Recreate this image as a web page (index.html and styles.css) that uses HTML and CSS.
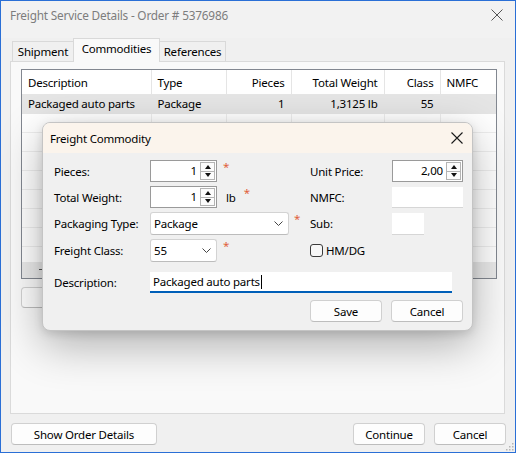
FILE: index.html
```html
<!DOCTYPE html>
<html>
<head>
<meta charset="utf-8">
<title>Freight Service Details</title>
<link rel="stylesheet" href="styles.css">
</head>
<body>
<div class="window">
  <div class="titlebar">
    <span class="title">Freight Service Details - Order # 5376986</span>
    <svg class="win-close" width="12" height="12" viewBox="0 0 12 12"><path d="M0.5 0.5 L11.5 11.5 M11.5 0.5 L0.5 11.5" stroke="#555" stroke-width="1" fill="none"/></svg>
  </div>
  <div class="tabs">
    <div class="tab t-ship">Shipment</div>
    <div class="tab t-comm active">Commodities</div>
    <div class="tab t-ref">References</div>
  </div>
  <div class="panel">
    <div class="list">
      <div class="list-body">
        <table class="grid">
          <colgroup>
            <col class="c1"><col class="c2"><col class="c3"><col class="c4"><col class="c5"><col class="c6">
          </colgroup>
          <thead>
            <tr><th>Description</th><th>Type</th><th class="r">Pieces</th><th class="r">Total Weight</th><th class="r">Class</th><th>NMFC</th></tr>
          </thead>
          <tbody>
            <tr class="sel"><td>Packaged auto parts</td><td>Package</td><td class="r">1</td><td class="r">1,3125 lb</td><td class="r">55</td><td></td></tr>
            <tr><td></td><td></td><td></td><td></td><td></td><td></td></tr>
            <tr><td></td><td></td><td></td><td></td><td></td><td></td></tr>
            <tr><td></td><td></td><td></td><td></td><td></td><td></td></tr>
            <tr><td></td><td></td><td></td><td></td><td></td><td></td></tr>
            <tr><td></td><td></td><td></td><td></td><td></td><td></td></tr>
            <tr><td></td><td></td><td></td><td></td><td></td><td></td></tr>
            <tr><td></td><td></td><td></td><td></td><td></td><td></td></tr>
            <tr><td></td><td></td><td></td><td></td><td></td><td></td></tr>
          </tbody>
        </table>
      </div>
      <div class="hscroll"><span class="dash"></span></div>
    </div>
    <div class="list-actions"><button class="btn add">Add</button></div>
  </div>
  <div class="footer">
    <button class="btn show">Show Order Details</button>
    <span class="spacer"></span>
    <button class="btn std">Continue</button>
    <button class="btn std">Cancel</button>
  </div>

  <div class="dialog">
    <div class="dlg-title">
      <span>Freight Commodity</span>
      <svg class="dlg-close" width="12" height="12" viewBox="0 0 12 12"><path d="M0.5 0.5 L11.5 11.5 M11.5 0.5 L0.5 11.5" stroke="#1a1a1a" stroke-width="1.1" fill="none"/></svg>
    </div>
    <div class="dlg-body">
      <div class="form">
        <label>Pieces:</label>
        <div class="cell">
          <div class="spin w67"><span class="val">1</span><span class="spinbtns"><span class="sb up"></span><span class="sb down"></span></span></div>
          <span class="req">*</span>
        </div>
        <label>Unit Price:</label>
        <div class="cell">
          <div class="spin w71"><span class="val">2,00</span><span class="spinbtns"><span class="sb up"></span><span class="sb down"></span></span></div>
        </div>

        <label>Total Weight:</label>
        <div class="cell">
          <div class="spin w67"><span class="val">1</span><span class="spinbtns"><span class="sb up"></span><span class="sb down"></span></span></div>
          <span class="unit">lb</span>
          <span class="req">*</span>
        </div>
        <label>NMFC:</label>
        <div class="cell"><div class="text-in w71"></div></div>

        <label>Packaging Type:</label>
        <div class="cell">
          <div class="combo w139"><span>Package</span><svg width="9" height="5" viewBox="0 0 9 5"><path d="M0.5 0.5 L4.5 4.5 L8.5 0.5" stroke="#444" stroke-width="1" fill="none"/></svg></div>
          <span class="req r6">*</span>
        </div>
        <label>Sub:</label>
        <div class="cell"><div class="text-in w32 h22"></div></div>

        <label>Freight Class:</label>
        <div class="cell">
          <div class="combo w67"><span>55</span><svg width="9" height="5" viewBox="0 0 9 5"><path d="M0.5 0.5 L4.5 4.5 L8.5 0.5" stroke="#444" stroke-width="1" fill="none"/></svg></div>
          <span class="req">*</span>
        </div>
        <div class="check-cell"><span class="checkbox"></span><span>HM/DG</span></div>
      </div>
      <div class="desc-row">
        <label>Description:</label>
        <div class="desc-in"><span>Packaged auto parts</span><span class="caret"></span></div>
      </div>
      <div class="dlg-buttons">
        <button class="btn std">Save</button>
        <button class="btn std">Cancel</button>
      </div>
    </div>
  </div>

  <svg class="grip" width="8" height="8" viewBox="0 0 8 8">
    <rect x="6" y="0" width="1.5" height="1.5" fill="#b5b5b5"/>
    <rect x="3" y="3" width="1.5" height="1.5" fill="#b5b5b5"/>
    <rect x="6" y="3" width="1.5" height="1.5" fill="#b5b5b5"/>
    <rect x="0" y="6" width="1.5" height="1.5" fill="#b5b5b5"/>
    <rect x="3" y="6" width="1.5" height="1.5" fill="#b5b5b5"/>
    <rect x="6" y="6" width="1.5" height="1.5" fill="#b5b5b5"/>
  </svg>
</div>
</body>
</html>
```
FILE: styles.css
```css
* { box-sizing: border-box; }
html, body { margin: 0; padding: 0; }
body {
  width: 516px;
  height: 453px;
  overflow: hidden;
  font-family: "Noto Sans", "Liberation Sans", sans-serif;
  font-size: 11.5px;
  letter-spacing: -0.2px;
  color: #000;
  background: #f0f0f0;
}
.window {
  position: relative;
  width: 516px;
  height: 453px;
  border: 1px solid #2a6fd6;
  background: #f0f0f0;
  display: flex;
  flex-direction: column;
}
.titlebar {
  height: 37px;
  display: flex;
  justify-content: space-between;
  align-items: flex-start;
  padding: 6px 12px 0 9px;
  background: #f2f2f2;
}
.title { color: #7d7d7d; font-size: 11.8px; line-height: 16px; }
.win-close { margin-top: 2px; }

.tabs {
  height: 23px;
  display: flex;
  align-items: flex-end;
  padding-left: 11px;
  position: relative;
  z-index: 1;
}
.tab {
  height: 20px;
  border: 1px solid #d9d9d9;
  border-bottom: none;
  background: #f0f0f0;
  text-align: center;
  line-height: 19px;
}
.t-ship { width: 62px; }
.t-comm { width: 87px; margin-left: -1px; }
.t-ref { width: 67px; margin-left: -1px; }
.tab.active {
  height: 24px;
  margin-bottom: -1px;
  background: #f9f9f9;
  line-height: 20px;
}

.panel {
  margin: 0 10px 0 9px;
  height: 353px;
  border: 1px solid #dadada;
  background: #f9f9f9;
  padding: 7px 7px 0 10px;
}
.list {
  height: 210px;
  border: 1px solid #828790;
  background: #fff;
  display: flex;
  flex-direction: column;
}
.list-body { height: 192px; overflow: hidden; }
.grid {
  border-collapse: collapse;
  table-layout: fixed;
  width: 474px;
}
.c1 { width: 129px; }
.c2 { width: 75px; }
.c3 { width: 65px; }
.c4 { width: 93px; }
.c5 { width: 56px; }
.c6 { width: 56px; }
.grid th {
  height: 24px;
  font-weight: normal;
  text-align: left;
  padding: 0 6px;
  border-right: 1px solid #e5e5e5;
  white-space: nowrap;
}
.grid th:last-child { border-right: none; }
.grid td {
  height: 19px;
  padding: 0 6px;
  border: 1px solid #eeeeee;
  border-top: none;
  white-space: nowrap;
  overflow: hidden;
}
.grid td:first-child { border-left: none; }
.grid td:last-child { border-right: none; }
.grid .r { text-align: right; }
.grid tr.sel td { background: #e5e5e5; border-color: #e5e5e5; }
.hscroll {
  height: 16px;
  background: #eaeaea;
  position: relative;
}
.dash {
  position: absolute;
  left: 17px;
  top: 7px;
  width: 3px;
  height: 1px;
  background: #555;
}
.list-actions { margin-top: 8px; }
.btn {
  font-family: inherit;
  font-size: 11.5px;
  letter-spacing: -0.2px;
  color: #000;
  background: #fdfdfd;
  border: 1px solid #d0d0d0;
  border-bottom-color: #bdbdbd;
  border-radius: 4px;
  padding: 0;
  height: 22px;
  line-height: 19px;
  text-align: center;
}
.btn.add { width: 80px; height: 21px; }
.footer {
  display: flex;
  margin-top: 9px;
  padding: 0 9px 0 10px;
  gap: 9px;
}
.btn.show { width: 146px; }
.btn.std { width: 72px; }
.spacer { flex: 1; }

.dialog {
  position: absolute;
  left: 41px;
  top: 121px;
  width: 431px;
  height: 209px;
  border: 1px solid #c4c4c4;
  border-radius: 8px;
  background: #f0f0f0;
  box-shadow: 0 14px 44px rgba(0, 0, 0, 0.30), 0 3px 10px rgba(0, 0, 0, 0.12);
  overflow: hidden;
  z-index: 5;
}
.dlg-title {
  height: 30px;
  background: #fbf4ec;
  display: flex;
  align-items: center;
  justify-content: space-between;
  padding: 0 9px 0 7px;
}
.dlg-body { padding: 7px 9px 0 11px; }
.form {
  display: grid;
  grid-template-columns: 96px 160px 82px 71px;
  grid-template-rows: 22px 22px 23px 23px;
  row-gap: 4px;
  align-items: center;
}
.cell { display: flex; align-items: center; height: 100%; }
.spin {
  height: 22px;
  background: #fff;
  border: 1px solid #9a9a9a;
  display: flex;
}
.w67 { width: 67px; }
.w71 { width: 71px; }
.w139 { width: 139px; }
.w32 { width: 32px; }
.val {
  flex: 1;
  text-align: right;
  padding-right: 3px;
  line-height: 20px;
}
.spinbtns {
  width: 16px;
  display: flex;
  flex-direction: column;
  padding: 1px 1px 1px 0;
}
.sb {
  flex: 1;
  border: 1px solid #b4b4b4;
  background: #fcfcfc;
  position: relative;
}
.sb.down { border-top: none; }
.sb::after {
  content: "";
  position: absolute;
  left: 50%;
  top: 50%;
  margin-left: -3px;
  margin-top: -2px;
  border-left: 3px solid transparent;
  border-right: 3px solid transparent;
}
.sb.up::after { border-bottom: 4px solid #111; }
.sb.down::after { border-top: 4px solid #111; }
.req {
  color: #e0603b;
  align-self: flex-start;
  margin-left: 6px;
  line-height: 14px;
  margin-top: 0;
}
.req.r6 { margin-left: 5px; }
.unit { margin-left: 9px; }
.unit + .req { margin-left: 8px; }
.text-in {
  height: 21px;
  background: #fff;
  border-bottom: 1px solid #d6d6d6;
}
.text-in.h22 { height: 22px; }
.combo {
  height: 23px;
  background: #fff;
  border: 1px solid #d3d3d3;
  border-bottom-color: #bcbcbc;
  border-radius: 3px;
  display: flex;
  align-items: center;
  justify-content: space-between;
  padding: 0 5px 0 3px;
}
.check-cell {
  grid-column: 3 / span 2;
  display: flex;
  align-items: center;
  gap: 3px;
}
.checkbox {
  width: 13px;
  height: 13px;
  border: 1px solid #3a3a3a;
  border-radius: 3px;
  background: #f7f7f7;
}
.desc-row {
  display: flex;
  align-items: center;
  margin-top: 10px;
}
.desc-row label { width: 96px; }
.desc-in {
  width: 302px;
  height: 21px;
  background: #fff;
  border-bottom: 2px solid #005fb8;
  display: flex;
  align-items: center;
  padding-left: 3px;
}
.caret {
  width: 1px;
  height: 14px;
  background: #000;
  margin-left: 1px;
}
.dlg-buttons {
  display: flex;
  justify-content: flex-end;
  gap: 9px;
  margin-top: 7px;
}
.grip {
  position: absolute;
  right: 1px;
  bottom: 1px;
}
```
